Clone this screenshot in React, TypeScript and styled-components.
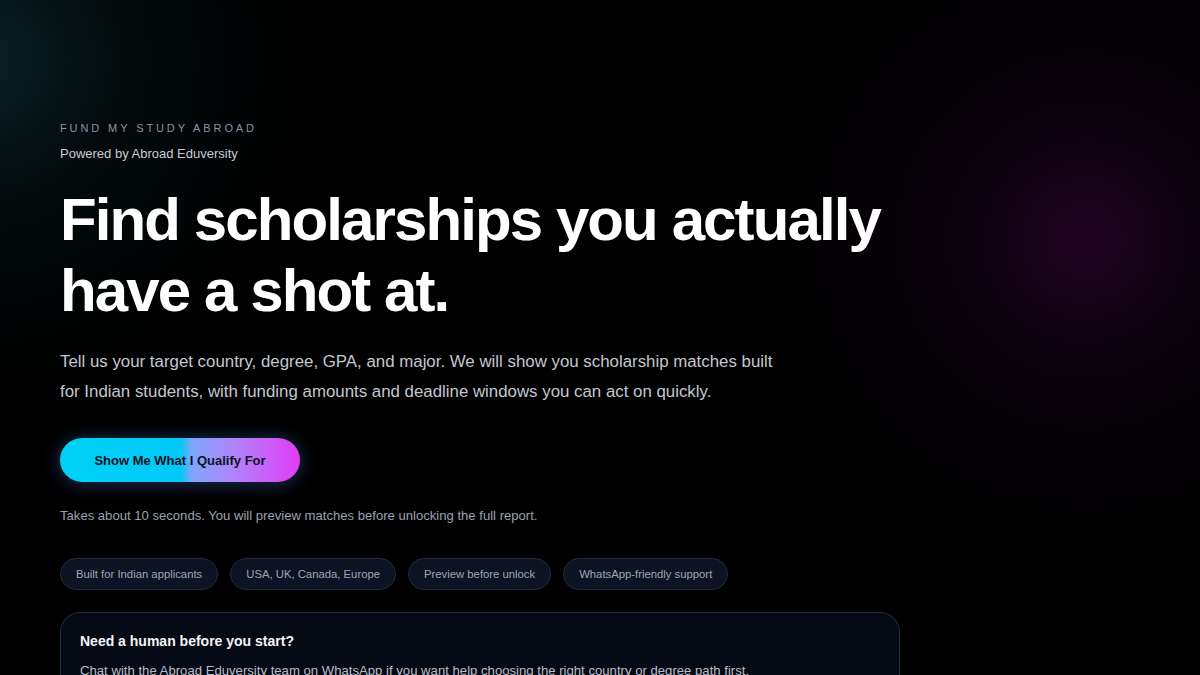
import React from "react";
import styled, { createGlobalStyle } from "styled-components";

const Global = createGlobalStyle`
  html, body { margin: 0; padding: 0; background: #000; }
  body { font-family: "Liberation Sans", Arial, sans-serif; }
  * { box-sizing: border-box; }
`;

const Page = styled.div`
  min-height: 675px;
  height: 675px;
  overflow: hidden;
  background:
    radial-gradient(circle at 1085px 240px, rgba(60, 8, 62, 0.5) 0px, rgba(36, 5, 42, 0.3) 120px, rgba(0,0,0,0) 300px),
    radial-gradient(circle at -20px 60px, rgba(20, 60, 70, 0.55) 0px, rgba(10, 35, 40, 0.3) 140px, rgba(0,0,0,0) 330px),
    #000;
`;

const Hero = styled.main`
  display: flex;
  flex-direction: column;
  align-items: flex-start;
  padding: 121px 60px 0 60px;
  max-width: 1000px;
`;

const Eyebrow = styled.div`
  font-size: 11px;
  letter-spacing: 2.9px;
  color: #8b93a3;
  line-height: 14px;
`;

const Powered = styled.div`
  margin-top: 11px;
  font-size: 13px;
  color: #c9ccd3;
  line-height: 16px;
`;

const Title = styled.h1`
  margin: 22px 0 0 0;
  font-size: 60px;
  font-weight: 700;
  line-height: 71px;
  color: #ffffff;
  letter-spacing: -1.9px;
  white-space: nowrap;
`;

const Lead = styled.p`
  margin: 21px 0 0 0;
  font-size: 16.85px;
  line-height: 30px;
  color: #c3c7d0;
  max-width: 725px;
`;

const Cta = styled.button`
  margin-top: 31px;
  height: 44px;
  width: 240px;
  border: none;
  border-radius: 22px;
  background: linear-gradient(90deg, #00d2f6 0%, #00c8f8 50%, #7fa6fb 55%, #b084fb 72%, #e23cf6 100%);
  color: #0b1322;
  font-family: "Liberation Sans", Arial, sans-serif;
  font-weight: 700;
  font-size: 13px;
  box-shadow: 0 0 18px rgba(0, 190, 240, 0.25), 0 4px 22px rgba(180, 60, 240, 0.15);
  cursor: pointer;
`;

const Note = styled.div`
  margin-top: 26px;
  font-size: 13.1px;
  color: #9aa2b2;
  line-height: 16px;
`;

const Chips = styled.div`
  margin-top: 34px;
  display: flex;
  gap: 12px;
`;

const Chip = styled.span`
  height: 32px;
  padding: 0 15px;
  display: inline-flex;
  align-items: center;
  border-radius: 16px;
  background: #0c1322;
  border: 1px solid #222b3d;
  color: #9da6b8;
  font-size: 11.3px;
`;

const Card = styled.section`
  margin-top: 22px;
  width: 840px;
  border-radius: 20px;
  background: #050913;
  border: 1px solid #262d3c;
  padding: 20px 19px 20px 19px;
`;

const CardTitle = styled.div`
  font-size: 14px;
  font-weight: 700;
  color: #f4f5f7;
  line-height: 16px;
`;

const CardText = styled.div`
  margin-top: 13px;
  font-size: 13.15px;
  color: #b9bfca;
  line-height: 18px;
`;

export default function App() {
  return (
    <>
      <Global />
      <Page>
        <Hero>
          <Eyebrow>FUND MY STUDY ABROAD</Eyebrow>
          <Powered>Powered by Abroad Eduversity</Powered>
          <Title>
            Find scholarships you actually
            <br />
            have a shot at.
          </Title>
          <Lead>
            Tell us your target country, degree, GPA, and major. We will show you scholarship matches built
            for Indian students, with funding amounts and deadline windows you can act on quickly.
          </Lead>
          <Cta>Show Me What I Qualify For</Cta>
          <Note>Takes about 10 seconds. You will preview matches before unlocking the full report.</Note>
          <Chips>
            <Chip>Built for Indian applicants</Chip>
            <Chip>USA, UK, Canada, Europe</Chip>
            <Chip>Preview before unlock</Chip>
            <Chip>WhatsApp-friendly support</Chip>
          </Chips>
          <Card>
            <CardTitle>Need a human before you start?</CardTitle>
            <CardText>
              Chat with the Abroad Eduversity team on WhatsApp if you want help choosing the right country or degree path first.
            </CardText>
          </Card>
        </Hero>
      </Page>
    </>
  );
}
